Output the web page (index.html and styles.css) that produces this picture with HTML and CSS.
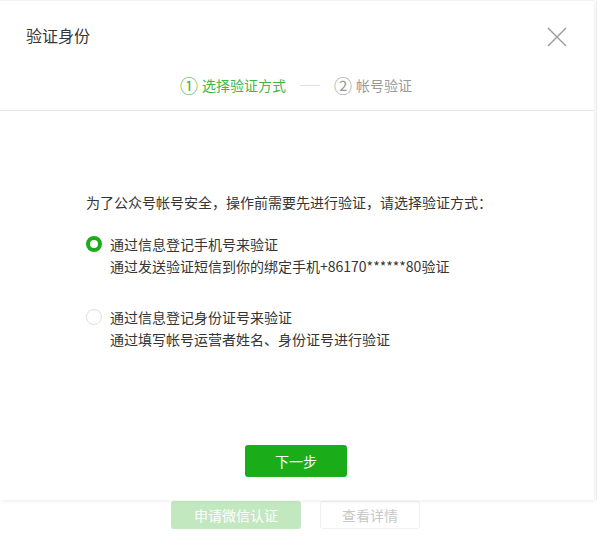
FILE: index.html
```html
<!DOCTYPE html>
<html lang="zh-CN">
<head>
<meta charset="utf-8">
<title>验证身份</title>
<link rel="stylesheet" href="styles.css">
</head>
<body>
<div class="page">
  <div class="page-actions">
    <span class="btn-apply">申请微信认证</span>
    <span class="btn-detail">查看详情</span>
  </div>
  <div class="side-edge"></div>
</div>
<div class="dialog">
  <div class="dialog-head">
    <h3 class="dialog-title">验证身份</h3>
    <span class="dialog-close">
      <svg width="20" height="20" viewBox="0 0 20 20"><path d="M1 1 L19 19 M19 1 L1 19" stroke="#9a9a9a" stroke-width="1.4" fill="none"/></svg>
    </span>
    <div class="steps">
      <span class="step step-current"><span class="step-num">①</span>选择验证方式</span>
      <span class="step-sep"></span>
      <span class="step"><span class="step-num">②</span>帐号验证</span>
    </div>
  </div>
  <div class="dialog-body">
    <p class="prompt">为了公众号帐号安全，操作前需要先进行验证，请选择验证方式：</p>
    <div class="option">
      <span class="radio radio-on"></span>
      <div class="option-text">
        <div class="option-label">通过信息登记手机号来验证</div>
        <div class="option-desc">通过发送验证短信到你的绑定手机+86170******80验证</div>
      </div>
    </div>
    <div class="option option-second">
      <span class="radio"></span>
      <div class="option-text">
        <div class="option-label">通过信息登记身份证号来验证</div>
        <div class="option-desc">通过填写帐号运营者姓名、身份证号进行验证</div>
      </div>
    </div>
    <div class="actions">
      <span class="btn-next">下一步</span>
    </div>
  </div>
</div>
</body>
</html>
```
FILE: styles.css
```css
* { box-sizing: border-box; }
html, body { margin: 0; padding: 0; }
body {
  background: #fff;
  font-family: "Noto Sans CJK SC", "Microsoft YaHei", sans-serif;
  color: #353535;
  font-size: 14px;
  width: 601px;
  height: 545px;
  overflow: hidden;
  position: relative;
}
.page {
  height: 545px;
  position: relative;
}
.page-actions {
  display: flex;
  gap: 19px;
  padding-top: 501px;
  padding-left: 171px;
}
.btn-apply {
  width: 130px;
  height: 28px;
  line-height: 28px;
  background: #c2e8c0;
  color: #fff;
  text-align: center;
  border-radius: 3px;
  font-size: 14px;
}
.btn-detail {
  width: 100px;
  height: 28px;
  line-height: 26px;
  border: 1px solid #f0f0f0;
  color: #c8c8c8;
  text-align: center;
  border-radius: 3px;
  font-size: 14px;
}
.side-edge {
  position: absolute;
  top: 0;
  right: 4px;
  width: 1px;
  height: 500px;
  background: #f0f2f4;
}
.dialog {
  position: absolute;
  left: 0;
  top: 0;
  width: 594px;
  height: 500px;
  background: #fff;
  border-top: 1px solid #f2f2f2;
  box-shadow: 1px 1px 4px rgba(0,0,0,0.08);
}
.dialog-head {
  position: relative;
  border-bottom: 1px solid #e7e7eb;
  padding-top: 22px;
  padding-bottom: 13px;
}
.dialog-title {
  margin: 0;
  padding-left: 26px;
  font-size: 16px;
  font-weight: normal;
  line-height: 24px;
  color: #353535;
}
.dialog-close {
  position: absolute;
  top: 26px;
  right: 27px;
  width: 20px;
  height: 20px;
  display: block;
}
.dialog-close svg { display: block; }
.steps {
  margin-top: 26px;
  display: flex;
  align-items: center;
  justify-content: center;
  padding-right: 2px;
  line-height: 24px;
  font-size: 14px;
}
.step {
  color: #9a9a9a;
  display: flex;
  align-items: center;
}
.step-num {
  font-size: 18px;
  margin-right: 4px;
  line-height: 24px;
}
.step-current { color: #44b549; }
.step-sep {
  width: 20px;
  height: 1px;
  background: #e0e0e0;
  margin: 0 14px;
}
.dialog-body {
  padding: 81px 0 0 86px;
}
.prompt {
  margin: 0;
  line-height: 20px;
  color: #353535;
}
.option {
  display: flex;
  align-items: flex-start;
  gap: 8px;
  margin-top: 21px;
}
.option-second { margin-top: 29px; }
.radio {
  flex: none;
  width: 16px;
  height: 16px;
  border-radius: 50%;
  border: 1px solid #e0e0e0;
  margin-top: 3px;
  background: #fff;
}
.radio-on {
  border: 4px solid #1aad19;
}
.option-text {
  line-height: 22px;
  color: #353535;
}
.actions {
  display: flex;
  padding-left: 159px;
  margin-top: 95px;
}
.btn-next {
  width: 102px;
  height: 32px;
  line-height: 32px;
  background: #1aad19;
  color: #fff;
  border-radius: 3px;
  text-align: center;
  font-size: 14px;
}
```
